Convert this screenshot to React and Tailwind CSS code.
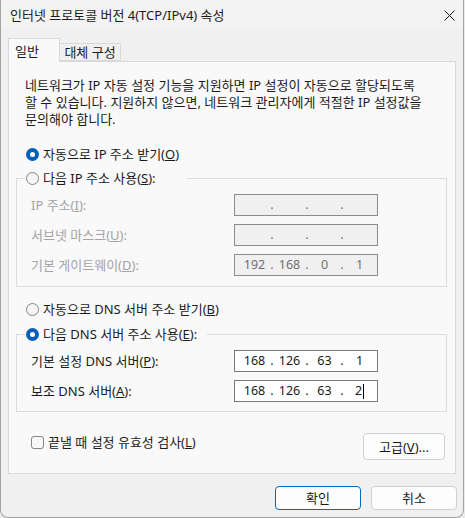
import React from 'react'

function Radio({ checked, children }) {
  return (
    <div className="flex items-center h-4">
      {checked ? (
        <span className="w-[13px] h-[13px] rounded-full bg-[#005fb8] flex items-center justify-center shrink-0">
          <span className="w-[5px] h-[5px] rounded-full bg-white" />
        </span>
      ) : (
        <span className="w-[13px] h-[13px] rounded-full border border-[#858585] bg-[#f5f5f5] shrink-0" />
      )}
      <span className="ml-[4px] whitespace-nowrap">{children}</span>
    </div>
  )
}

function IPField({ parts = ['', '', '', ''], disabled, caret }) {
  return (
    <div className={'w-[144px] h-[22px] border flex items-center pl-[4px] text-[12.5px] ' +
      (disabled ? 'bg-[#f0f0f0] border-[#8c8c8c] text-[#707070]' : 'bg-white border-[#7a7a7a] text-[#1a1a1a]')}>
      {parts.map((p, i) => (
        <React.Fragment key={i}>
          <span className="w-[31px] text-center flex items-center justify-center">
            {p}
            {caret && i === 3 && <span className="inline-block w-px h-[15px] bg-black ml-px" />}
          </span>
          {i < 3 && <span className="w-[4px] text-center">.</span>}
        </React.Fragment>
      ))}
    </div>
  )
}

function Row({ label, disabled, children }) {
  return (
    <div className="flex items-center h-[22px]">
      <span className={'w-[217px] pl-[14px] whitespace-nowrap ' + (disabled ? 'text-[#a3a3a3]' : '')}>{label}</span>
      {children}
    </div>
  )
}

export default function App() {
  return (
    <div className="w-[465px] h-[518px] bg-[#ececec] font-['Noto_Sans','Noto_Sans_CJK_KR',sans-serif] text-[13px] leading-[16px] text-[#1b1b1b]">
      <div className="w-[464px] h-[518px] bg-[#f0f0f0] border-x border-b border-[#a3a3a3] rounded-b-[8px] flex flex-col overflow-hidden">
        {/* title bar */}
        <div className="h-[30px] bg-[#f3f3f3] flex items-center justify-between pl-[9px] pr-[8px] shrink-0">
          <span className="whitespace-nowrap">인터넷 프로토콜 버전 4(TCP/IPv4) 속성</span>
          <svg width="11" height="11" viewBox="0 0 11 11" className="mt-px">
            <path d="M0.5 0.5 L10.5 10.5 M10.5 0.5 L0.5 10.5" stroke="#1b1b1b" strokeWidth="1" fill="none" />
          </svg>
        </div>

        <div className="px-[7px] flex flex-col">
          {/* tabs */}
          <div className="flex items-end mt-[8px] -mb-px relative z-10">
            <div className="w-[52px] h-[24px] border border-b-0 border-[#d9d9d9] bg-[#f9f9f9] flex items-center pl-[6px]">일반</div>
            <div className="w-[61px] h-[18px] mb-px border border-l-0 border-[#d9d9d9] bg-[#f0f0f0] flex items-center justify-center">대체 구성</div>
          </div>

          {/* panel */}
          <div className="w-[448px] h-[413px] border border-[#d9d9d9] bg-[#f9f9f9] px-[7px] flex flex-col">
            <p className="mt-[15px] ml-[9px] whitespace-nowrap leading-[17px]">
              네트워크가 IP 자동 설정 기능을 지원하면 IP 설정이 자동으로 할당되도록<br />
              할 수 있습니다. 지원하지 않으면, 네트워크 관리자에게 적절한 IP 설정값을<br />
              문의해야 합니다.
            </p>

            <div className="mt-[18px] ml-[10px]">
              <Radio checked>자동으로 IP 주소 받기(<u>O</u>)</Radio>
            </div>

            <fieldset className="mt-[8px] w-[431px] border border-[#dcdcdc] pt-[8px] pb-[10px] flex flex-col gap-[8px]">
              <legend className="ml-[8px] w-[162px] pl-px">
                <Radio>다음 IP 주소 사용(<u>S</u>):</Radio>
              </legend>
              <Row label={<>IP 주소(<u>I</u>):</>} disabled>
                <IPField disabled />
              </Row>
              <Row label={<>서브넷 마스크(<u>U</u>):</>} disabled>
                <IPField disabled />
              </Row>
              <Row label={<>기본 게이트웨이(<u>D</u>):</>} disabled>
                <IPField disabled parts={['192', '168', '0', '1']} />
              </Row>
            </fieldset>

            <div className="mt-[14px] ml-[10px]">
              <Radio>자동으로 DNS 서버 주소 받기(<u>B</u>)</Radio>
            </div>

            <fieldset className="mt-[9px] w-[431px] border border-[#dcdcdc] pt-[8px] pb-[9px] flex flex-col gap-[8px]">
              <legend className="ml-[8px] w-[182px] pl-px">
                <Radio checked>다음 DNS 서버 주소 사용(<u>E</u>):</Radio>
              </legend>
              <Row label={<>기본 설정 DNS 서버(<u>P</u>):</>}>
                <IPField parts={['168', '126', '63', '1']} />
              </Row>
              <Row label={<>보조 DNS 서버(<u>A</u>):</>}>
                <IPField parts={['168', '126', '63', '2']} caret />
              </Row>
            </fieldset>

            <div className="mt-[21px] flex justify-between items-start">
              <label className="ml-[15px] mt-px flex items-center h-4">
                <span className="w-[13px] h-[13px] rounded-[3px] border border-[#858585] bg-[#f7f7f7]" />
                <span className="ml-[4px] whitespace-nowrap">끝낼 때 설정 유효성 검사(<u>L</u>)</span>
              </label>
              <button className="w-[82px] h-[27px] mr-[3px] bg-[#fdfdfd] border border-[#d0d0d0] rounded-[4px]">
                고급(<u>V</u>)...
              </button>
            </div>
          </div>

          {/* dialog buttons */}
          <div className="mt-[12px] flex justify-end gap-[10px] -mr-px">
            <button className="w-[86px] h-[24px] bg-[#fdfdfd] border border-[#0067c0] rounded-[4px]">확인</button>
            <button className="w-[86px] h-[24px] bg-[#fdfdfd] border border-[#d0d0d0] rounded-[4px]">취소</button>
          </div>
        </div>
      </div>
    </div>
  )
}
